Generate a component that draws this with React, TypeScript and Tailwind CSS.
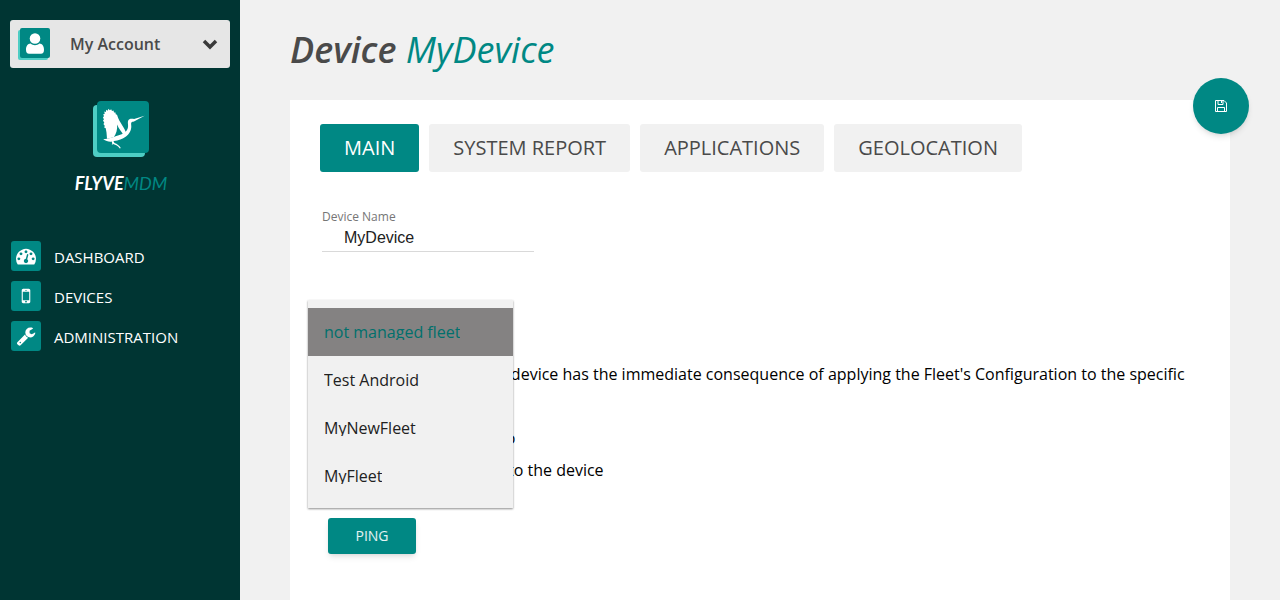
import React from "react";

const DASHBOARD =
  "M384 1152q0-53-37.5-90.5t-90.5-37.5-90.5 37.5-37.5 90.5 37.5 90.5 90.5 37.5 90.5-37.5 37.5-90.5zm192-448q0-53-37.5-90.5t-90.5-37.5-90.5 37.5-37.5 90.5 37.5 90.5 90.5 37.5 90.5-37.5 37.5-90.5zm428 481l101-382q6-26-7.5-48.5t-38.5-29.5-48 6.5-30 39.5l-101 382q-60 5-107 43.5t-63 98.5q-20 77 20 146t117 89 146-20 89-117q16-60-6-117t-72-91zm660-33q0-53-37.5-90.5t-90.5-37.5-90.5 37.5-37.5 90.5 37.5 90.5 90.5 37.5 90.5-37.5 37.5-90.5zm-640-640q0-53-37.5-90.5t-90.5-37.5-90.5 37.5-37.5 90.5 37.5 90.5 90.5 37.5 90.5-37.5 37.5-90.5zm448 192q0-53-37.5-90.5t-90.5-37.5-90.5 37.5-37.5 90.5 37.5 90.5 90.5 37.5 90.5-37.5 37.5-90.5zm320 448q0 261-141 483-19 29-54 29h-1402q-35 0-54-29-141-221-141-483 0-182 71-348t191-286 286-191 348-71 348 71 286 191 191 286 71 348z";
const MOBILE =
  "M976 1408q0-33-23.5-56.5t-56.5-23.5-56.5 23.5-23.5 56.5 23.5 56.5 56.5 23.5 56.5-23.5 23.5-56.5zm208-160v-704q0-13-9.5-22.5t-22.5-9.5h-512q-13 0-22.5 9.5t-9.5 22.5v704q0 13 9.5 22.5t22.5 9.5h512q13 0 22.5-9.5t9.5-22.5zm-192-848q0-16-16-16h-160q-16 0-16 16t16 16h160q16 0 16-16zm288-16v1024q0 52-38 90t-90 38h-512q-52 0-90-38t-38-90v-1024q0-52 38-90t90-38h512q52 0 90 38t38 90z";
const WRENCH =
  "M448 1472q0-26-19-45t-45-19-45 19-19 45 19 45 45 19 45-19 19-45zm644-420l-682 682q-37 37-90 37-52 0-91-37l-106-108q-38-36-38-90 0-53 38-91l681-681q39 98 114.5 173.5t173.5 114.5zm634-435q0 39-23 106-47 134-164.5 217.5t-258.5 83.5q-185 0-316.5-131.5t-131.5-316.5 131.5-316.5 316.5-131.5q58 0 121.5 16.5t107.5 46.5q16 11 16 28t-16 28l-293 169v224l193 107q5-3 79-48.5t135.5-81 70.5-35.5q15 0 23.5 10t8.5 25z";

const links = [
  { label: "DASHBOARD", path: DASHBOARD },
  { label: "DEVICES", path: MOBILE },
  { label: "ADMINISTRATION", path: WRENCH },
];

const tabs = ["MAIN", "SYSTEM REPORT", "APPLICATIONS", "GEOLOCATION"];
const fleets = ["not managed fleet", "Test Android", "MyNewFleet", "MyFleet"];

function AccountIcon() {
  return (
    <svg width="34" height="34" viewBox="0 0 34 34" aria-hidden="true">
      <rect x="1" y="3" width="30" height="30" rx="2" fill="#4ecdc4" />
      <rect x="3" y="1" width="30" height="30" rx="2" fill="#008884" />
      <circle cx="18" cy="11.500" r="5.300" fill="#fff" />
      <path d="M9 22.800c0-3.800 1.800-6.200 4.600-6.300 1.200 1.100 2.700 1.700 4.400 1.700s3.200-.6 4.400-1.700c2.800.1 4.600 2.500 4.600 6.300 0 2.800-1 4-3 4H12c-2 0-3-1.200-3-4z" fill="#fff" />
    </svg>
  );
}

function Logo() {
  return (
    <svg width="56" height="56" viewBox="0 0 56 56" aria-hidden="true">
      <rect x="0" y="4" width="52" height="52" rx="4" fill="#4ecdc4" />
      <rect x="4" y="0" width="52" height="52" rx="4" fill="#008884" />
      <g fill="#fff">
        <path d="M13.500 31.500l-.8-4.200-1.700-1.100.9-1.300-1.500-2 .9-1.200-1.300-2.100.9-1.200-1-2.300 1.100-.7-.7-2.500 1.400.1-.4-2.500 1.600.6.200-2.400 1.600 1.100.7-2 1.400 1.400 1.400-.9.800 1.700 1.500-.4.500 1.800 1.500.1.200 1.800 1.300.5c1.400 4.600 3.400 7.600 5.300 10.700 1.700 2.800 3.200 5.200 4.200 8.500l-2.700 1.500c-2-3.600-5.200-7-6.700-11 .5 5-.9 9.300-3.300 12.700l-6.800 1.600z" />
        <path d="M10.200 38.300c5.400-.4 9-1.800 12.400-3 4.300-1.600 8.400-2.300 10.700-5.300 1.600-2.100 2-4.200 1.700-6.600-.3-2.300-.2-4.200 1.400-5.100 1.400-.8 3.200-.6 4.700-.2l10.500-3.300-9.700 5.200c-1.300.7-2.400.6-3.300 1.200-.8.600-.4 2.300-.3 4 .1 4-2.100 8-5.300 10.300-3.600 2.600-7.500 4.200-12 4.600l-3.200.7c-2.700.1-5.100-.8-7.600-2.500z" />
        <path d="M18.500 39.300l1.300-.4 1.700 3c2.600.9 4.800 2.700 6.300 5l-1 .5c-1.800-2.200-4-3.600-6.700-4.300l-1.300.8.400-1.400z" />
      </g>
    </svg>
  );
}

function SaveIcon() {
  return (
    <svg width="12" height="12" viewBox="0 0 12 12" fill="none" stroke="#fff" aria-hidden="true">
      <path d="M.5.500h8.500l2.500 2.500v8.500H.500zM3 .500v4h5v-4M2.500 11.500v-4h7v4" />
      <path d="M6.500 1v2" />
    </svg>
  );
}

export default function App() {
  return (
    <div className="flex min-h-screen bg-[#f1f1f1] font-['Open_Sans',sans-serif] text-base text-black">
      <aside className="w-60 shrink-0 bg-[#003533]">
        <div className="px-2.5 pt-5">
          <button type="button" className="flex h-12 w-full items-center rounded-[3px] bg-[#e6e6e6] pl-[7px] pr-3 text-left font-semibold text-[#4a4a4a]">
            <AccountIcon />
            <span className="ml-[19px] flex-1">My Account</span>
            <svg width="16" height="12" viewBox="0 0 16 12" fill="none" stroke="#3a3a3a" strokeWidth="3.500" aria-hidden="true">
              <path d="M2 3l6 6 6-6" />
            </svg>
          </button>
        </div>
        <div className="flex flex-col items-center pl-0.5 pt-[33px]">
          <Logo />
          <p className="mt-3 font-['Lato',sans-serif] text-lg italic leading-7 text-white">
            <span className="font-bold">FLYVE</span>
            <span className="text-[#008884]">MDM</span>
          </p>
        </div>
        <nav className="mt-11 flex flex-col gap-2">
          {links.map((link) => (
            <a key={link.label} href="#" className="flex items-start gap-[13px] pl-[11px] text-[15px] leading-8 text-white">
              <span className="flex size-[30px] items-center justify-center rounded-[3px] bg-[#008884]">
                <svg width="20" height="20" viewBox="0 0 1792 1792" fill="#fff" aria-hidden="true">
                  <path d={link.path} />
                </svg>
              </span>
              {link.label}
            </a>
          ))}
        </nav>
      </aside>

      <main className="flex min-w-0 flex-1 flex-col px-[50px]">
        <h1 className="flex h-[100px] items-center text-4xl font-semibold italic text-[#4a4a4a]">
          <span>
            Device <span className="font-normal text-[#008884]">MyDevice</span>
          </span>
        </h1>

        <section className="relative flex-1 bg-white px-[30px] pt-6">
          <button type="button" aria-label="Save" className="absolute -right-[19px] -top-[22px] flex size-14 items-center justify-center rounded-full bg-[#008884] shadow-md">
            <SaveIcon />
          </button>

          <div className="flex gap-2.5">
            {tabs.map((tab, i) => (
              <button
                key={tab}
                type="button"
                className={
                  i === 0
                    ? "h-12 rounded-[3px] bg-[#008884] px-6 text-xl text-white"
                    : "h-12 rounded-[3px] bg-[#f1f1f1] px-6 text-xl text-[#4a4a4a]"
                }
              >
                {tab}
              </button>
            ))}
          </div>

          <div className="ml-0.5 mt-9 w-[212px]">
            <label htmlFor="device-name" className="block text-xs leading-[18px] text-[#767676]">
              Device Name
            </label>
            <input
              id="device-name"
              defaultValue="MyDevice"
              className="block h-[26px] w-full border-b border-[#d9d9d9] pb-0.5 pl-[22px] font-['Liberation_Sans',sans-serif] text-base text-[#212121] outline-none"
            />
          </div>

          <div className="relative mt-12 h-[58px]">
            <ul role="listbox" aria-label="Fleet" className="absolute -left-3 top-0 z-10 h-[208px] w-[205px] bg-[#f1f1f1] py-2 shadow-[0_1px_2px_rgba(0,0,0,0.45)]">
              {fleets.map((fleet, i) => (
                <li
                  key={fleet}
                  role="option"
                  aria-selected={i === 0}
                  className={i === 0 ? "flex h-12 items-center bg-[#848282] px-4 text-[#00706c]" : "flex h-12 items-center px-4 text-[#212121]"}
                >
                  <span className="overflow-hidden leading-4">{fleet}</span>
                </li>
              ))}
            </ul>
          </div>

          <div className="leading-8">
            <p>Assigning any fleet to the device has the immediate consequence of applying the Fleet's Configuration to the specific device</p>
            <p>Last contact: 12 hours ago</p>
            <p>Send a new ping request to the device</p>
          </div>

          <button type="button" className="ml-2 mt-8 h-9 w-[88px] rounded-[3px] bg-[#008884] text-sm text-white/90 shadow-md">
            PING
          </button>
        </section>
      </main>
    </div>
  );
}
